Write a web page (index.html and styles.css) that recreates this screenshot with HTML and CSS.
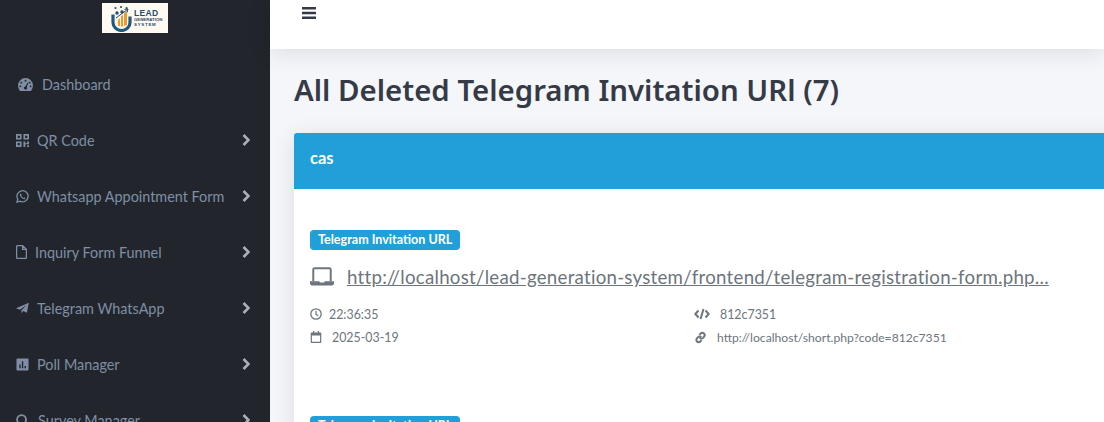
FILE: index.html
```html
<!DOCTYPE html>
<html lang="en">
<head>
  <meta charset="UTF-8" />
  <title>All Deleted Telegram Invitation URl</title>
  <link rel="stylesheet" href="styles.css">
</head>
<body>
  <div class="wrapper">
    <!-- Sidebar -->
    <aside class="sidebar">
      <div class="logo-row">
        <div class="logo">
          <svg class="logo-mark" viewBox="0 0 21 27">
            <circle cx="4.500" cy="3" r="1.100" fill="#1f4e6e"/>
            <circle cx="10" cy="2" r="1.100" fill="#1f4e6e"/>
            <circle cx="15.500" cy="3" r="1.100" fill="#1f4e6e"/>
            <path d="M2 9.500v8a8.500 8 0 0 0 17 0v-6" fill="none" stroke="#1f5a80" stroke-width="3.200"/>
            <path d="M7 21v-6l2-2v8zM10 21.500v-10l2-2v12zM13 21v-13l3-2v14z" fill="#ee9a2e"/>
            <circle cx="6" cy="8" r="1.700" fill="#1f4e6e"/>
            <circle cx="11" cy="7" r="1.700" fill="#1f4e6e"/>
            <path d="M5 13l12-9-1 3.500M17 4l-3.500.3" fill="none" stroke="#1f4e6e" stroke-width="1"/>
          </svg>
          <div class="logo-text">
            <span class="logo-lead">LEAD</span>
            <span class="logo-sub">GENERATION</span>
            <span class="logo-sub logo-sub-wide">SYSTEM</span>
          </div>
        </div>
      </div>
      <nav class="menu">
        <a class="menu-item">
          <svg class="ic ic-dash" viewBox="0 0 16 14"><path fill-rule="evenodd" d="M8 0a8 8 0 0 0-8 8c0 2 .7 4 1.800 5.400.2.300.5.600.9.600h10.600c.4 0 .7-.3.9-.6A8.800 8.800 0 0 0 16 8a8 8 0 0 0-8-8zM8 2a1 1 0 1 1 0 2 1 1 0 0 1 0-2zM3.500 4a1 1 0 1 1 0 2 1 1 0 0 1 0-2zM12.500 4a1 1 0 1 1 0 2 1 1 0 0 1 0-2zM2.500 8a1 1 0 1 1 0 2 1 1 0 0 1 0-2zM13.500 8a1 1 0 1 1 0 2 1 1 0 0 1 0-2zM10.300 4.800l.9.4L9.300 9.600A1.700 1.700 0 0 1 8 12.500a1.700 1.700 0 0 1-.2-3.400z"/></svg>
          <span class="menu-text menu-text-dash">Dashboard</span>
        </a>
        <a class="menu-item">
          <svg class="ic" viewBox="0 0 14 14"><path fill-rule="evenodd" d="M0 0h6v6H0zM1.800 1.800v2.400h2.400V1.800zM8 0h6v6H8zM9.800 1.800v2.400h2.400V1.800zM0 8h6v6H0zM1.800 9.800v2.400h2.400V9.800zM8 8h2v2h2V8h2v3h-4v3H8zM12 12h2v2h-2z"/></svg>
          <span class="menu-text">QR Code</span>
          <svg class="chev" viewBox="0 0 8 12"><path d="M1.500 1l5 5-5 5" fill="none" stroke="currentColor" stroke-width="2.600"/></svg>
        </a>
        <a class="menu-item">
          <svg class="ic" viewBox="0 0 14 14"><path fill="none" stroke="currentColor" stroke-width="1.400" d="M1 13l.9-3.200A6 6 0 1 1 4.200 12z"/><path d="M5 3.800c-.6.400-1 1-.8 1.900.4 1.700 2.300 3.700 4.100 4.100.9.200 1.600-.3 1.900-1l-1.500-1-.8.700C7 8 6.100 7.100 5.600 6.200l.7-.8z"/></svg>
          <span class="menu-text">Whatsapp Appointment Form</span>
          <svg class="chev" viewBox="0 0 8 12"><path d="M1.500 1l5 5-5 5" fill="none" stroke="currentColor" stroke-width="2.600"/></svg>
        </a>
        <a class="menu-item">
          <svg class="ic ic-file" viewBox="0 0 11 14"><path fill="none" stroke="currentColor" stroke-width="1.300" d="M1.600.6h5l3.800 3.800v8a1 1 0 0 1-1 1H1.600a1 1 0 0 1-1-1V1.600a1 1 0 0 1 1-1zM6.600.6v3.800h3.800"/></svg>
          <span class="menu-text">Inquiry Form Funnel</span>
          <svg class="chev" viewBox="0 0 8 12"><path d="M1.500 1l5 5-5 5" fill="none" stroke="currentColor" stroke-width="2.600"/></svg>
        </a>
        <a class="menu-item">
          <svg class="ic" viewBox="0 0 14 14"><path d="M13.800.7L11.700 11.500l-3.900-1.800L5.800 12V9.200L11.500 3 4.300 8.300 0 6.700z"/></svg>
          <span class="menu-text">Telegram WhatsApp</span>
          <svg class="chev" viewBox="0 0 8 12"><path d="M1.500 1l5 5-5 5" fill="none" stroke="currentColor" stroke-width="2.600"/></svg>
        </a>
        <a class="menu-item">
          <svg class="ic" viewBox="0 0 14 14"><path fill-rule="evenodd" d="M1.500.5h11a1 1 0 0 1 1 1v11a1 1 0 0 1-1 1h-11a1 1 0 0 1-1-1v-11a1 1 0 0 1 1-1zM3.500 7v4h1.500V7zM6.300 3.500V11h1.500V3.500zM9.200 8.500V11h1.500V8.500z"/></svg>
          <span class="menu-text">Poll Manager</span>
          <svg class="chev" viewBox="0 0 8 12"><path d="M1.500 1l5 5-5 5" fill="none" stroke="currentColor" stroke-width="2.600"/></svg>
        </a>
        <a class="menu-item">
          <svg class="ic" viewBox="0 0 14 14"><circle cx="6" cy="6" r="4.800" fill="none" stroke="currentColor" stroke-width="2"/><path d="M9.500 9.500l3.500 3.500" stroke="currentColor" stroke-width="2"/></svg>
          <span class="menu-text menu-text-survey">Survey Manager</span>
          <svg class="chev" viewBox="0 0 8 12"><path d="M1.500 1l5 5-5 5" fill="none" stroke="currentColor" stroke-width="2.600"/></svg>
        </a>
      </nav>
    </aside>

    <!-- Contenido -->
    <div class="main">
      <header class="topbar">
        <svg class="burger" viewBox="0 0 14 12"><path d="M0 0h14v2.400H0zM0 4.800h14v2.400H0zM0 9.600h14V12H0z"/></svg>
      </header>
      <div class="content">
        <h1 class="page-title">All Deleted Telegram Invitation URl (7)</h1>
        <section class="card">
          <div class="card-header">cas</div>
          <div class="card-body">
            <div class="entry">
              <span class="badge">Telegram Invitation URL</span>
              <div class="link-row">
                <svg class="laptop" viewBox="0 0 22 18"><path fill="none" stroke="currentColor" stroke-width="1.800" d="M3 13V2.200C3 1.500 3.500 1 4.200 1h13.600c.7 0 1.200.5 1.200 1.200V13"/><path d="M0 13h8.500l.6 1h3.800l.6-1H22v1.800c0 1-.8 1.900-1.700 1.900H1.700C.8 16.700 0 15.800 0 14.800z"/></svg>
                <a class="long-url">http://localhost/lead-generation-system/frontend/telegram-registration-form.php...</a>
              </div>
              <div class="meta">
                <div class="meta-item">
                  <svg class="meta-ic" viewBox="0 0 12 12"><circle cx="6" cy="6" r="5.200" fill="none" stroke="currentColor" stroke-width="1.300"/><path d="M6 2.800V6.300l2.200 1.400" fill="none" stroke="currentColor" stroke-width="1.200"/></svg>
                  <span>22:36:35</span>
                </div>
                <div class="meta-item">
                  <svg class="meta-ic meta-ic-wide" viewBox="0 0 16 12"><path fill="none" stroke="currentColor" stroke-width="2" d="M4.500 2.500L1.300 6l3.200 3.500M11.500 2.500L14.700 6l-3.200 3.500M9.500 1L6.500 11"/></svg>
                  <span class="meta-gap">812c7351</span>
                </div>
                <div class="meta-item">
                  <svg class="meta-ic" viewBox="0 0 12 12"><path fill-rule="evenodd" d="M3 0h1.200v1.500h3.600V0H9v1.500h1.200c.7 0 1.100.5 1.100 1.100v8.300c0 .6-.4 1.100-1.100 1.100H1.800C1.100 12 .7 11.500.7 10.900V2.600c0-.6.4-1.100 1.100-1.100H3zM1.900 4.500v6.300h8.200V4.500z"/></svg>
                  <span class="meta-gap">2025-03-19</span>
                </div>
                <div class="meta-item">
                  <svg class="meta-ic meta-ic-link" viewBox="0 0 12 12"><path fill="none" stroke="currentColor" stroke-width="1.800" d="M5 3.600l1.200-1.300a2.100 2.100 0 0 1 3 3L8.300 6.300a2.100 2.100 0 0 1-3 0M7 8.400L5.800 9.700a2.100 2.100 0 0 1-3-3l.9-1a2.100 2.100 0 0 1 3 0"/></svg>
                  <span class="short-url">http://localhost/short.php?code=812c7351</span>
                </div>
              </div>
            </div>
            <div class="entry">
              <span class="badge">Telegram Invitation URL</span>
            </div>
          </div>
        </section>
      </div>
    </div>
  </div>
</body>
</html>
```
FILE: styles.css
```css
* {
  box-sizing: border-box;
  margin: 0;
  padding: 0;
}
html, body {
  height: 100%;
  overflow: hidden;
  font-family: 'Lato', 'Noto Sans', sans-serif;
}
.wrapper {
  display: flex;
  height: 422px;
  overflow: hidden;
}
.sidebar {
  flex: 0 0 270px;
  background: #22262c;
  color: #7f8ea5;
  overflow: hidden;
}
.logo-row {
  display: flex;
  justify-content: center;
  padding-top: 3px;
}
.logo {
  width: 66px;
  height: 30px;
  background: #fff9f2;
  display: flex;
  align-items: center;
  padding-left: 9px;
  gap: 2px;
}
.logo-mark {
  flex: none;
  width: 21px;
  height: 27px;
}
.logo-text {
  display: flex;
  flex-direction: column;
  color: #1f4e6e;
  font-family: 'Liberation Sans', sans-serif;
  font-weight: 700;
  line-height: 1;
}
.logo-lead {
  font-size: 8.500px;
  line-height: 7px;
  letter-spacing: 0.3px;
}
.logo-sub {
  font-size: 4.300px;
  line-height: 5px;
}
.logo-sub-wide {
  letter-spacing: 0.8px;
}
.menu {
  padding-top: 23px;
}
.menu-item {
  display: flex;
  align-items: center;
  height: 56px;
  padding: 0 20px 0 16px;
  font-size: 14.400px;
}
.ic {
  flex: none;
  width: 13px;
  height: 13px;
  fill: currentColor;
}
.ic-dash {
  width: 17px;
  margin-left: 1px;
}
.ic-file {
  width: 11px;
  height: 14px;
}
.menu-text {
  flex: 1;
  margin-left: 8px;
  white-space: nowrap;
}
.menu-text-dash {
  margin-left: 8px;
}
.menu-text-survey {
  margin-left: 9px;
}
.chev {
  flex: none;
  width: 8px;
  height: 12px;
  color: #a9b0ba;
}
.main {
  flex: 1;
  min-width: 0;
  background: #f4f6f9;
}
.topbar {
  height: 49px;
  background: #fff;
  box-shadow: 0 4px 24px rgba(0, 0, 0, 0.1);
  padding: 7px 0 0 32px;
  position: relative;
}
.burger {
  display: block;
  width: 14px;
  height: 12px;
  fill: #343a46;
}
.content {
  padding: 0 0 0 24px;
}
.page-title {
  font-family: 'Noto Sans', sans-serif;
  font-size: 29.400px;
  font-weight: 600;
  color: #343a46;
  line-height: 36px;
  margin-top: 23px;
  white-space: nowrap;
}
.card {
  margin-top: 25px;
  width: 830px;
  background: #fff;
  border-radius: 3px 3px 0 0;
  box-shadow: 0 4px 24px rgba(0, 0, 0, 0.1);
}
.card-header {
  height: 56px;
  background: #209fd9;
  color: #fff;
  font-weight: 700;
  font-size: 16.500px;
  padding: 16px;
  line-height: 19px;
  border-radius: 3px 3px 0 0;
}
.card-body {
  padding: 41px 16px 0;
}
.entry {
  height: 186px;
}
.badge {
  display: block;
  width: fit-content;
  background: #209fd9;
  color: #fff;
  font-size: 12.550px;
  font-weight: 700;
  line-height: 20px;
  height: 20px;
  padding: 0 8px;
  border-radius: 4px;
}
.link-row {
  display: flex;
  align-items: center;
  gap: 13px;
  margin-top: 14px;
  height: 26px;
  color: #6c757d;
}
.laptop {
  flex: none;
  width: 24px;
  height: 20px;
  fill: currentColor;
}
.long-url {
  font-size: 18.700px;
  letter-spacing: 0.25px;
  color: #6c757d;
  text-decoration: underline;
  white-space: nowrap;
}
.meta {
  display: grid;
  grid-template-columns: 384px 1fr;
  row-gap: 5px;
  margin-top: 15px;
  font-size: 12.400px;
  color: #6c757d;
}
.meta-item {
  display: flex;
  align-items: center;
  height: 18px;
  gap: 7px;
}
.meta-ic {
  flex: none;
  width: 12px;
  height: 12px;
  fill: currentColor;
}
.meta-ic-wide {
  width: 16px;
}
.meta-ic-link {
  width: 13px;
  height: 13px;
}
.meta-gap {
  margin-left: 3px;
}
.short-url {
  margin-left: 3px;
  font-size: 12.150px;
}
```
